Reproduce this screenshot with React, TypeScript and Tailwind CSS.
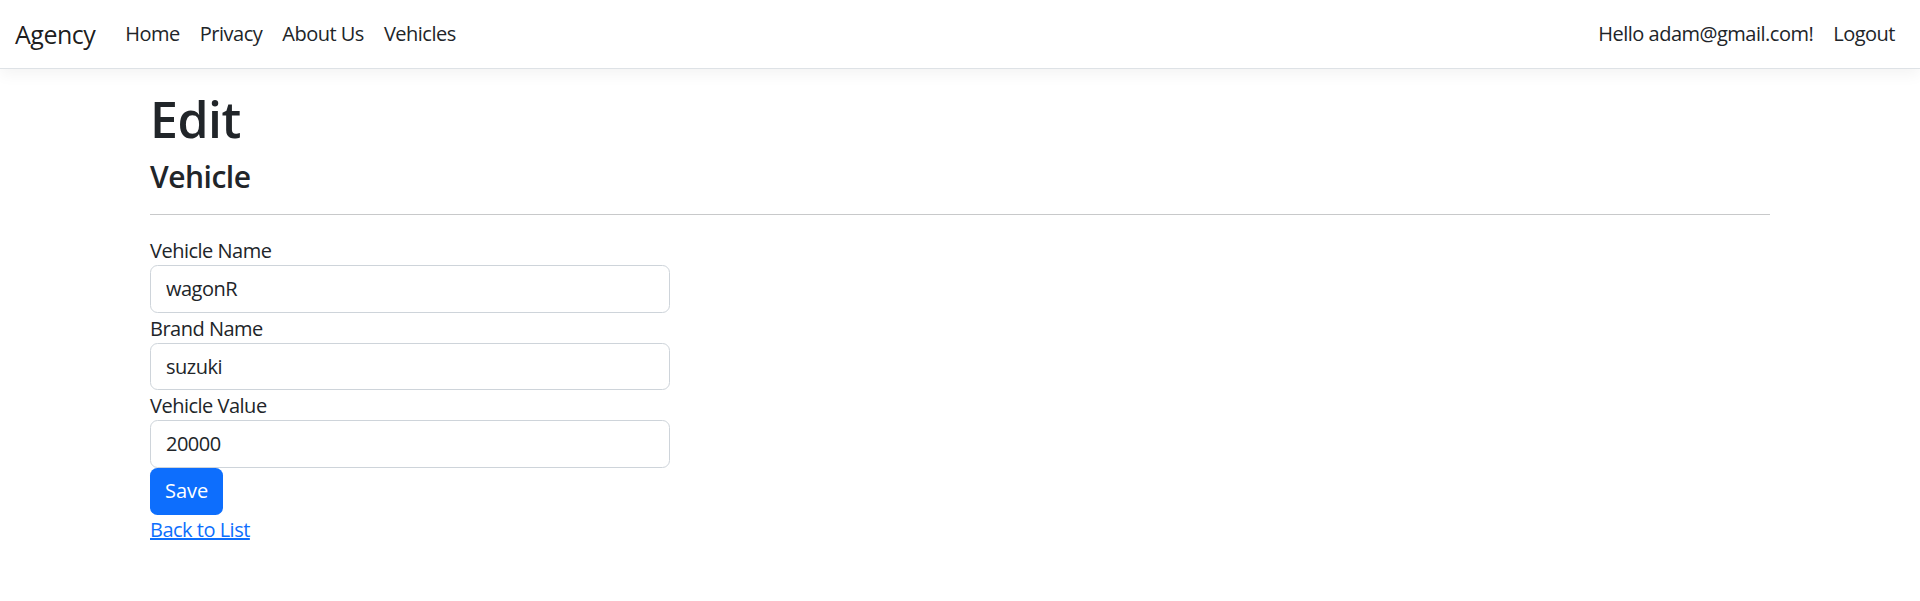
import React from 'react';

const font = { fontFamily: '"Open Sans", "Noto Sans", sans-serif' };

const Field: React.FC<{ label: string; value: string }> = ({ label, value }) => (
  <div>
    <label className="block leading-[30px] pt-px">{label}</label>
    <input
      type="text"
      defaultValue={value}
      className="block w-full h-[47.5px] -mt-px px-[15px] border border-[#ced4da] rounded-[7.5px] bg-white text-[20px] tracking-[-0.025em] text-[#212529] outline-none"
    />
  </div>
);

const App: React.FC = () => {
  return (
    <div className="min-h-screen bg-white text-[20px] tracking-[-0.025em] text-[#212529]" style={font}>
      {/* Navbar */}
      <header className="h-[69px] border-b border-[#dee2e6] bg-white shadow-[0_5px_15px_rgba(0,0,0,0.05)] mb-[20px]">
        <nav className="h-[68px] px-[15px] flex items-center">
          <a className="text-[25px] text-black/90 mr-[20px] leading-[37px]" href="#">Agency</a>
          <ul className="flex">
            {['Home', 'Privacy', 'About Us', 'Vehicles'].map((t) => (
              <li key={t}>
                <a className="block px-[10px] leading-[30px] text-[#212529]" href="#">{t}</a>
              </li>
            ))}
          </ul>
          <ul className="flex ml-auto">
            <li><span className="block px-[10px] leading-[30px] text-[#212529]">Hello adam@gmail.com!</span></li>
            <li><a className="block px-[10px] leading-[30px] text-[#212529]" href="#">Logout</a></li>
          </ul>
        </nav>
      </header>

      {/* Content */}
      <main className="w-[1650px] mx-auto px-[15px] pb-[20px]">
        <h1 className="text-[50px] font-semibold leading-[60px] mb-[10px]">Edit</h1>
        <h4 className="text-[30px] font-semibold leading-[36px]">Vehicle</h4>
        <hr className="mt-[19px] mb-[20px] border-t border-[#c8c9ca]" />
        <form className="w-[520px]">
          <Field label="Vehicle Name" value="wagonR" />
          <Field label="Brand Name" value="suzuki" />
          <Field label="Vehicle Value" value="20000" />
          <div>
            <button
              type="button"
              className="h-[47.5px] px-[15px] bg-[#0d6efd] text-white rounded-[7.5px] leading-[30px] tracking-normal"
            >
              Save
            </button>
          </div>
        </form>
        <div className="leading-[30px]">
          <a href="#" className="text-[#0d6efd] underline">Back to List</a>
        </div>
      </main>
    </div>
  );
};

export default App;
